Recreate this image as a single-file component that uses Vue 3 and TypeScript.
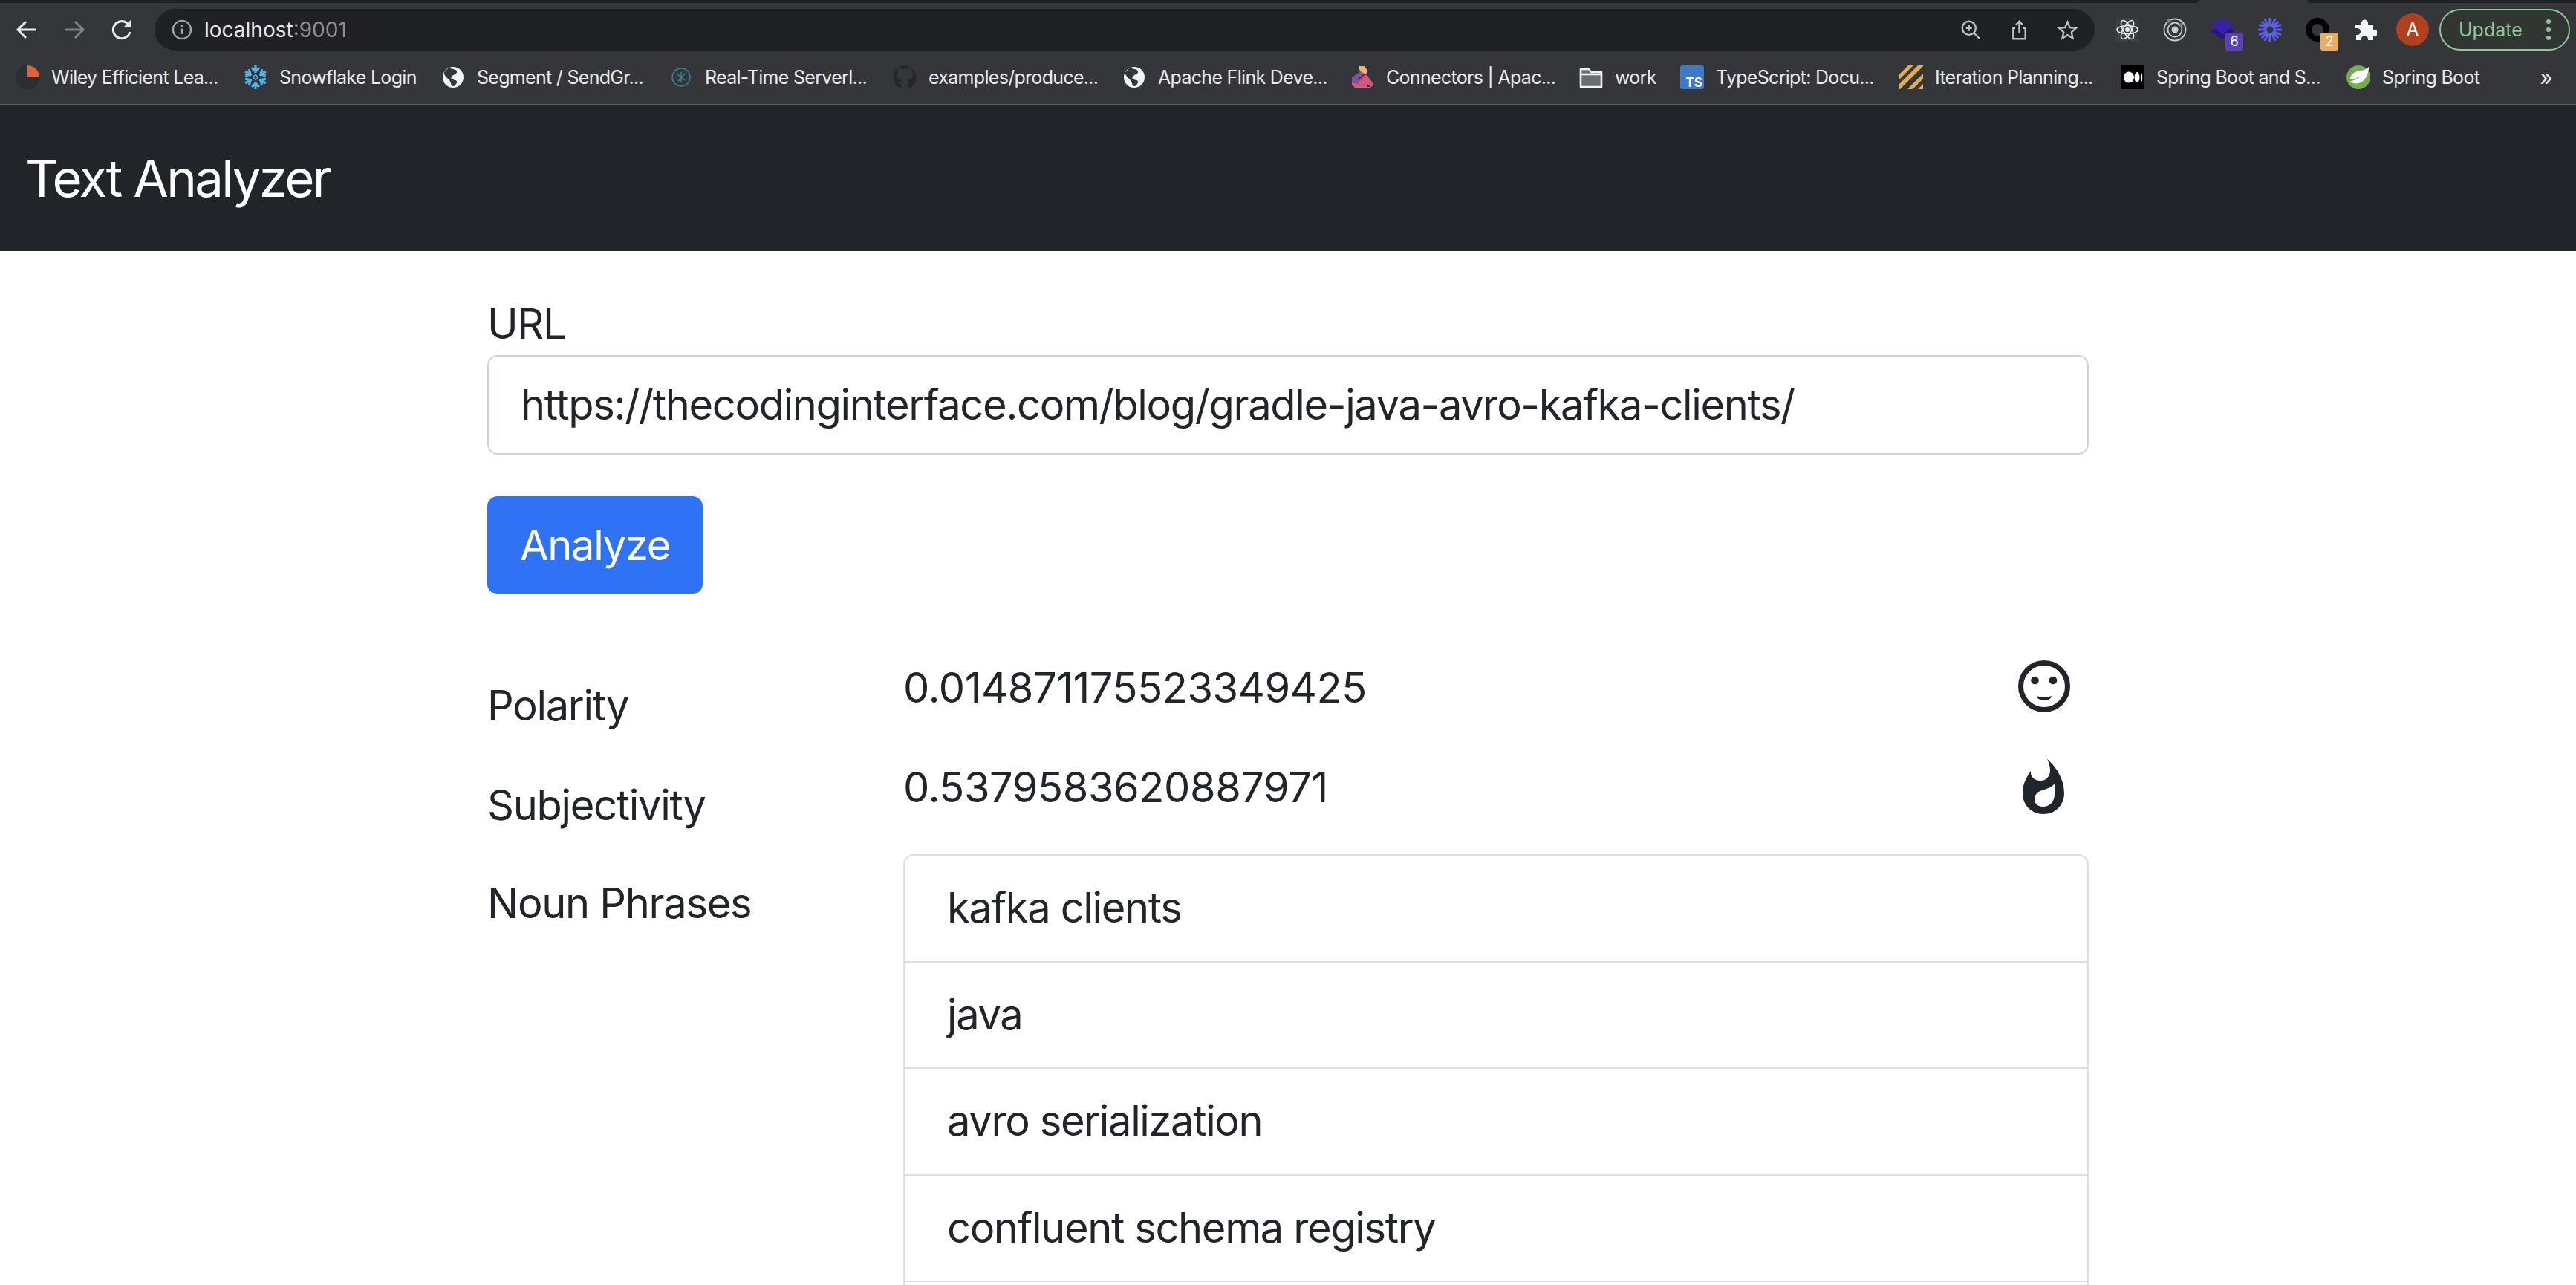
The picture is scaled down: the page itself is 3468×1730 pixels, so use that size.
<script setup lang="ts">
const bookmarks = [
  { label: 'Wiley Efficient Lea...', icon: 'wiley', w: 307 },
  { label: 'Snowflake Login', icon: 'snow', w: 266 },
  { label: 'Segment / SendGr...', icon: 'globe', w: 307 },
  { label: 'Real-Time Serverl...', icon: 'real', w: 301 },
  { label: 'examples/produce...', icon: 'github', w: 309 },
  { label: 'Apache Flink Deve...', icon: 'globe', w: 307 },
  { label: 'Connectors | Apac...', icon: 'squirrel', w: 308 },
  { label: 'work', icon: 'folder', w: 136 },
  { label: 'TypeScript: Docu...', icon: 'ts', w: 295 },
  { label: 'Iteration Planning...', icon: 'iter', w: 298 },
  { label: 'Spring Boot and S...', icon: 'medium', w: 304 },
  { label: 'Spring Boot', icon: 'spring', w: 200 }
]

const phrases = ['kafka clients', 'java', 'avro serialization', 'confluent schema registry']
const sixArms = [0, 60, 120, 180, 240, 300]
</script>

<template>
  <div class="page">
    <div class="tabstrip">
      <div class="tab-left"></div>
      <div class="tab-right"></div>
    </div>
    <div class="toolbar">
      <svg class="nav-icon" viewBox="0 0 32 32" fill="none" stroke="#e8eaed" stroke-width="3"><path d="M29 16H5M15 5 4 16l11 11" /></svg>
      <svg class="nav-icon fwd" viewBox="0 0 32 32" fill="none" stroke="#7f8184" stroke-width="3"><path d="M3 16h24M17 5l11 11-11 11" /></svg>
      <svg class="nav-icon" viewBox="0 0 32 32" fill="none" stroke="#e8eaed" stroke-width="3"><path d="M27 19a11.500 11.500 0 1 1-3-11" /><path d="M28 3v10H18z" fill="#e8eaed" stroke="none" /></svg>
      <div class="omnibox">
        <svg class="info" viewBox="0 0 28 28" fill="none" stroke="#a0a2a6" stroke-width="2.400"><circle cx="14" cy="14" r="12" /><path d="M14 12.500V20M14 7.500v3" /></svg>
        <span class="host">localhost</span><span class="port">:9001</span>
        <div class="omni-actions">
          <svg class="omni-icon" viewBox="0 0 32 32" fill="none" stroke="#bdc1c6" stroke-width="2.600"><circle cx="13" cy="13" r="10" /><path d="m20 20 9 9M13 8.500v9M8.500 13h9" /></svg>
          <svg class="omni-icon" viewBox="0 0 32 32" fill="none" stroke="#bdc1c6" stroke-width="2.600"><path d="M10 13H7v16h18V13h-3M16 21V3M11 8l5-5 5 5" /></svg>
          <svg class="omni-icon" viewBox="0 0 32 32" fill="none" stroke="#bdc1c6" stroke-width="2.600"><path d="m16 4 3.600 8.200 8.900.9-6.700 6 1.900 8.800-7.700-4.500-7.700 4.500 1.900-8.800-6.700-6 8.900-.9z" /></svg>
        </div>
      </div>
      <div class="extensions">
        <div class="ext react">
          <svg viewBox="0 0 32 32" fill="none" stroke="#e8eaed" stroke-width="1.600"><ellipse cx="16" cy="16" rx="14" ry="5.500" /><ellipse cx="16" cy="16" rx="14" ry="5.500" transform="rotate(60 16 16)" /><ellipse cx="16" cy="16" rx="14" ry="5.500" transform="rotate(120 16 16)" /><circle cx="16" cy="16" r="3" fill="#e8eaed" stroke="none" /></svg>
        </div>
        <div class="ext">
          <svg viewBox="0 0 32 32" fill="none" stroke="#c9cbce" stroke-width="1.800"><circle cx="16" cy="16" r="14.500" /><circle cx="16" cy="16" r="9.500" /><circle cx="16" cy="16" r="4.500" fill="#c9cbce" stroke="none" /><circle cx="8" cy="4" r="2.800" fill="#7f8184" stroke="none" /><circle cx="24" cy="10" r="2.800" fill="#7f8184" stroke="none" /></svg>
        </div>
        <div class="ext">
          <svg viewBox="0 0 32 32"><path d="m0 18 16-9 16 9-16 11z" fill="#2a1580" /><path d="M16 0 32 11 16 22 0 11z" fill="#3a1fa8" /></svg>
          <span class="badge purple">6</span>
        </div>
        <div class="ext">
          <svg viewBox="0 0 32 32" fill="none" stroke="#5a5ff0" stroke-width="3"><circle cx="16" cy="16" r="6" /><path d="M16 0v10M16 22v10M0 16h10M22 16h10M5 5l7 7M20 20l7 7M27 5l-7 7M12 20l-7 7M9 1l4 9M19 22l4 9M23 1l-4 9M13 22l-4 9M1 9l9 4M22 19l9 4M1 23l9-4M22 13l9-4" /></svg>
        </div>
        <div class="ext">
          <svg viewBox="0 0 32 32" fill="none" stroke="#000" stroke-width="8"><circle cx="16" cy="16" r="12" /></svg>
          <span class="badge orange">2</span>
        </div>
        <div class="ext">
          <svg viewBox="0 0 32 32" fill="#f1f3f4"><path d="M3 9h8V7a4.500 4.500 0 1 1 9 0v2h7v7h1.500a4.500 4.500 0 1 1 0 9H27v5h-7v-1.500a4.500 4.500 0 1 0-9 0V30H4v-7h1.500a4.500 4.500 0 1 0 0-9H3z" /></svg>
        </div>
        <div class="avatar">A</div>
      </div>
      <div class="update">
        <span>Update</span>
        <div class="dots"><i></i><i></i><i></i></div>
      </div>
    </div>
    <div class="bookmarks">
      <div v-for="b in bookmarks" :key="b.label" class="bookmark" :style="{ width: b.w + 'px' }">
        <svg class="fav" viewBox="0 0 32 32">
          <template v-if="b.icon === 'wiley'">
            <circle cx="16" cy="16" r="16" fill="#2b2e34" />
            <path d="M16 0a16 16 0 0 1 16 16H16z" fill="#e0623a" />
          </template>
          <template v-else-if="b.icon === 'snow'">
            <g v-for="a in sixArms" :key="a" :transform="`rotate(${a} 16 16)`" fill="none" stroke="#4fb3e8" stroke-width="3.200">
              <path d="M16 0v10M11 3l5 5 5-5" />
            </g>
            <path d="m16 12.500 3.500 3.500-3.500 3.500-3.500-3.500z" fill="none" stroke="#4fb3e8" stroke-width="1.500" />
          </template>
          <template v-else-if="b.icon === 'globe'">
            <circle cx="16" cy="16" r="14" fill="#f1f3f4" />
            <path d="M9 4c5 0 11 1 12 4 1 4-5 4-7 7s1 4 5 5 2 5-2 8c-5 0-3-5-6-8S3 13 4 9z" fill="#35363a" />
          </template>
          <g v-else-if="b.icon === 'real'" fill="none" stroke="#2c8a96" stroke-width="1.500">
            <circle cx="16" cy="16" r="12" />
            <path d="M16 9v14M11 12l10 8M21 11l-9 10" />
          </g>
          <template v-else-if="b.icon === 'github'">
            <path d="M16 0a16 16 0 0 0-5 31v-6c-4 1-5-2-6-3 2 0 3 2 6 1 0-2 1-3 1-3-4-1-7-3-7-8 0-2 1-4 2-5 0-2 0-3 1-4 2 0 3 1 4 2a14 14 0 0 1 8 0c1-1 2-2 4-2 1 1 1 2 1 4 1 1 2 3 2 5 0 5-3 7-7 8 1 1 1 2 1 4v7a16 16 0 0 0-5-31z" fill="#24262a" />
          </template>
          <template v-else-if="b.icon === 'squirrel'">
            <path d="M2 18 14 8l9 6 6 8 2 4-4 4H6l-4-4z" fill="#d6567c" />
            <path d="M11 1h8l4 6-2 5-8-4z" fill="#eeb777" />
            <path d="M2 16 14 8l4 7-8 10-8-2z" fill="#85509f" />
            <path d="m10 19 9-7" stroke="#5a2a3a" stroke-width="2" />
            <path d="M23 26h4v3h-4z" fill="#4a2030" />
          </template>
          <template v-else-if="b.icon === 'folder'">
            <path d="M2 5h11l3 4h14v20H2z" fill="#6b6c6f" stroke="#f1f3f4" stroke-width="2.600" stroke-linejoin="round" />
            <path d="M2 12h28" stroke="#f1f3f4" stroke-width="2.600" />
          </template>
          <template v-else-if="b.icon === 'ts'">
            <rect width="32" height="32" rx="3" fill="#3f78c4" />
            <text x="30" y="29" text-anchor="end" class="ts-text">TS</text>
          </template>
          <g v-else-if="b.icon === 'iter'" fill="#e2ad4c">
            <path d="M25 0h7v1L1 32H0v-7zM32 11v7L18 32h-7zM12 0h7L0 19v-7zM32 25v7h-7z" />
          </g>
          <template v-else-if="b.icon === 'medium'">
            <rect width="32" height="32" rx="2" fill="#000" />
            <ellipse cx="11" cy="16" rx="7" ry="7.500" fill="#fff" />
            <ellipse cx="22" cy="16" rx="3.500" ry="7" fill="#fff" />
            <ellipse cx="28" cy="16" rx="1.200" ry="6" fill="#fff" />
          </template>
          <template v-else-if="b.icon === 'spring'">
            <circle cx="16" cy="16" r="16" fill="#74ae4e" />
            <path d="M30 2c0 10-5 20-14 22-5 1-9 0-11-3 3 0 9-1 14-7-5 4-10 5-14 5 0-5 4-10 10-11 6-1 11-2 15-6z" fill="#fff" />
          </template>
        </svg>
        <span>{{ b.label }}</span>
      </div>
      <span class="more">»</span>
    </div>

    <nav class="navbar">Text Analyzer</nav>

    <main class="container">
      <label class="field-label">URL</label>
      <input class="url-input" value="https://thecodinginterface.com/blog/gradle-java-avro-kafka-clients/" />
      <button class="analyze">Analyze</button>

      <div class="row metric">
        <div class="row-label">Polarity</div>
        <div class="row-value">
          <span>0.014871175523349425</span>
          <svg class="metric-icon" viewBox="0 0 70 70" fill="#212529">
            <circle cx="35" cy="35" r="31.500" fill="none" stroke="#212529" stroke-width="7" />
            <circle cx="22.500" cy="27" r="5.300" />
            <circle cx="47" cy="27" r="5.300" />
            <path d="M25 48c6 2 14 2 20 0-1 4-5 6-10 6s-9-2-10-6z" />
          </svg>
        </div>
      </div>
      <div class="row metric second">
        <div class="row-label">Subjectivity</div>
        <div class="row-value">
          <span>0.5379583620887971</span>
          <svg class="metric-icon flame" viewBox="0 0 56 74">
            <path fill="#212529" fill-rule="evenodd" d="M33 0C44 9 56 26 56 46 56 62 44 74 28 74 12 74 0 62 0 46 0 33 5 25 11 16 10 24 16 29 24 29 32 29 37 23 37 15 37 9 35 4 33 0ZM43 33C39 38 33 40 26 42 19 44 16 49 16 54 16 60 21 64 27 64 36 64 43 58 43 47 43 42 43 37 43 33Z" />
          </svg>
        </div>
      </div>
      <div class="row">
        <div class="row-label">Noun Phrases</div>
        <ul class="phrases">
          <li v-for="p in phrases" :key="p">{{ p }}</li>
          <li></li>
        </ul>
      </div>
    </main>
  </div>
</template>

<style scoped>
.page {
  width: 3468px;
  height: 1730px;
  overflow: hidden;
  background: #fff;
  font-family: Inter, "Liberation Sans", sans-serif;
  color: #212529;
}
.tabstrip {
  height: 4px;
  background: #35363a;
  display: flex;
  justify-content: space-between;
}
.tab-left {
  width: 2960px;
  background: #202124;
  border-bottom-right-radius: 4px;
}
.tab-right {
  width: 362px;
  background: #202124;
  border-bottom-left-radius: 4px;
}
.toolbar {
  height: 64px;
  background: #35363a;
  display: flex;
  align-items: flex-start;
  padding: 8px 8px 0 20px;
  box-sizing: border-box;
}
.nav-icon {
  width: 32px;
  height: 32px;
  margin: 12px 32px 0 0;
}
.omnibox {
  width: 2612px;
  height: 56px;
  margin-left: -4px;
  border-radius: 28px;
  background: #202124;
  display: flex;
  align-items: center;
  padding: 0 22px 0 23px;
  box-sizing: border-box;
  font-size: 28px;
}
.info {
  width: 28px;
  height: 28px;
  margin-right: 16px;
}
.host {
  color: #e8eaed;
}
.port {
  color: #8f9195;
}
.omni-actions {
  margin-left: auto;
  display: flex;
  gap: 36px;
}
.omni-icon {
  width: 29px;
  height: 29px;
}
.extensions {
  display: flex;
  align-items: center;
  height: 56px;
  margin-left: 28px;
}
.ext {
  position: relative;
  width: 32px;
  height: 32px;
  margin-right: 32px;
}
.ext svg {
  width: 32px;
  height: 32px;
  display: block;
}
.react {
  background: #3c3d41;
  border-radius: 2px;
}
.badge {
  position: absolute;
  right: -12px;
  bottom: -12px;
  width: 24px;
  height: 24px;
  border-radius: 3px;
  color: #fff;
  font-size: 18px;
  line-height: 24px;
  text-align: center;
}
.purple {
  background: #5b41b8;
}
.orange {
  background: #e8ad60;
}
.avatar {
  width: 44px;
  height: 44px;
  margin-left: -6px;
  border-radius: 50%;
  background: #b0401e;
  color: #fff;
  font-size: 24px;
  line-height: 44px;
  text-align: center;
}
.update {
  margin-left: 14px;
  width: 176px;
  height: 56px;
  border: 2px solid #8fc79a;
  border-radius: 28px;
  box-sizing: border-box;
  display: flex;
  align-items: center;
  justify-content: space-between;
  padding: 0 24px;
  color: #8fc79a;
  font-size: 25px;
  background: #323633;
}
.dots {
  display: flex;
  flex-direction: column;
  gap: 5px;
}
.dots i {
  width: 6px;
  height: 6px;
  border-radius: 50%;
  background: #8fc79a;
}
.bookmarks {
  height: 74px;
  background: #35363a;
  display: flex;
  align-items: center;
  padding-left: 21px;
  box-sizing: border-box;
  border-bottom: 2px solid #5f6064;
  color: #e8eaed;
  font-size: 25px;
  letter-spacing: -0.7px;
  white-space: nowrap;
}
.bookmark {
  display: flex;
  align-items: center;
  gap: 16px;
  flex: none;
}
.fav {
  width: 32px;
  height: 32px;
  flex: none;
}
.ts-text {
  font-size: 17px;
  font-weight: 700;
  fill: #fff;
  letter-spacing: 0;
}
.more {
  margin-left: auto;
  margin-right: 32px;
  font-size: 30px;
}
.navbar {
  height: 196px;
  background: #212529;
  color: #fff;
  padding-left: 34px;
  display: flex;
  align-items: center;
  font-size: 69px;
  letter-spacing: -2.7px;
  box-sizing: border-box;
}
.container {
  width: 2156px;
  margin-left: 656px;
  padding-top: 56px;
  letter-spacing: -1.3px;
}
.field-label {
  display: block;
  font-size: 56px;
  line-height: 84px;
}
.url-input {
  display: block;
  width: 100%;
  height: 134px;
  box-sizing: border-box;
  border: 2px solid #ced4da;
  border-radius: 14px;
  padding: 0 43px;
  font: inherit;
  font-size: 56px;
  letter-spacing: -1.36px;
  color: #212529;
  margin-bottom: 56px;
  outline: none;
}
.analyze {
  display: block;
  width: 290px;
  height: 132px;
  border: none;
  border-radius: 14px;
  background: #2f72f3;
  color: #fff;
  font: inherit;
  font-size: 56px;
  letter-spacing: -1.3px;
  padding: 0;
  margin-bottom: 84px;
}
.row {
  display: flex;
}
.metric {
  height: 134px;
}
.second {
  height: 132px;
}
.row-label {
  width: 560px;
  flex: none;
  font-size: 56px;
  line-height: 84px;
  padding-top: 24px;
}
.row-value {
  flex: 1;
  display: flex;
  justify-content: space-between;
  align-items: flex-start;
  font-size: 56px;
  line-height: 84px;
  letter-spacing: -0.44px;
}
.metric-icon {
  width: 70px;
  height: 70px;
  margin: 5px 25px 0 0;
}
.flame {
  width: 56px;
  height: 74px;
  margin: 4px 33px 0 0;
}
.phrases {
  flex: 1;
  list-style: none;
  margin: 0;
  padding: 0;
  border: 2px solid #dfdfdf;
  border-radius: 14px;
  font-size: 56px;
  letter-spacing: -1.36px;
}
.phrases li {
  height: 143.500px;
  box-sizing: border-box;
  padding-left: 57px;
  line-height: 140px;
  border-bottom: 2px solid #dfdfdf;
}
</style>
